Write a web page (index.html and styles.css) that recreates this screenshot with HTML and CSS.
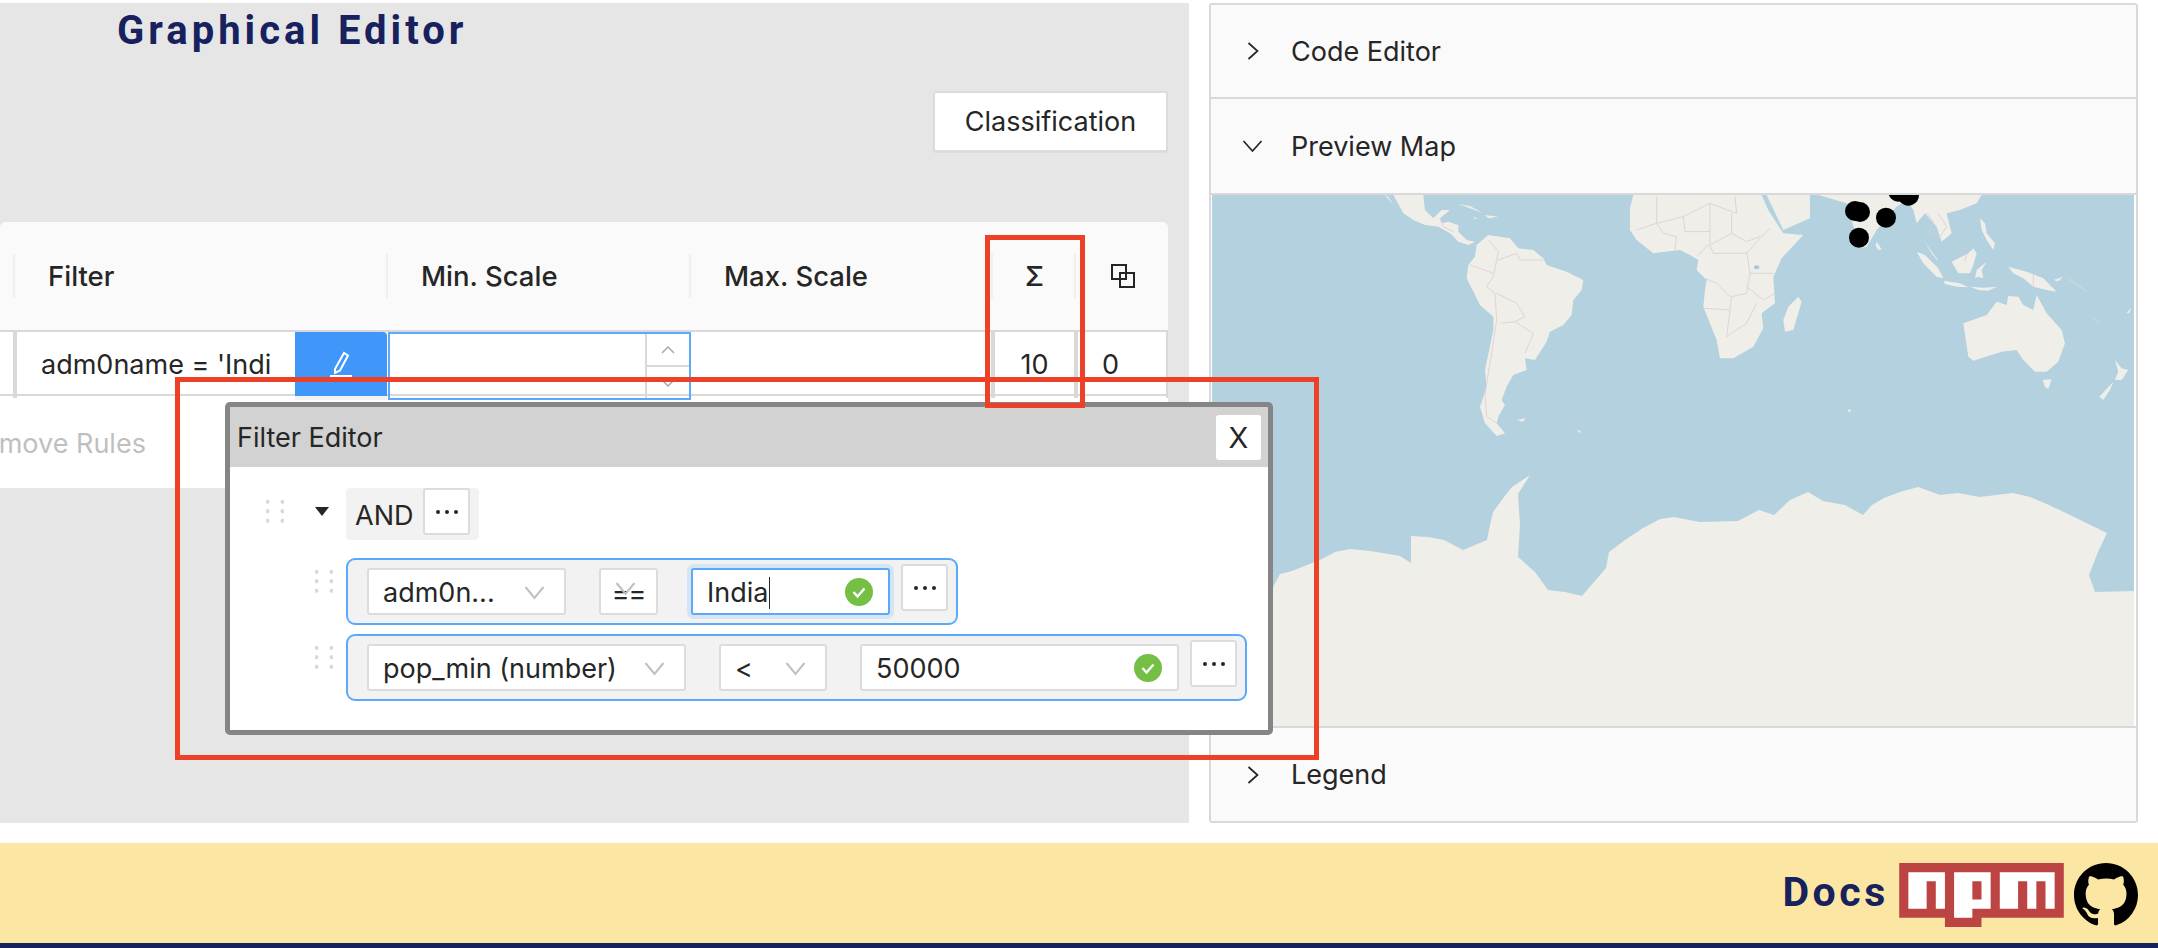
FILE: index.html
```html
<!DOCTYPE html>
<html lang="en">
<head>
<meta charset="utf-8">
<title>Graphical Editor</title>
<link rel="stylesheet" href="styles.css">
</head>
<body>
<svg class="defs" width="0" height="0" aria-hidden="true">
  <symbol id="dots" viewBox="0 0 24 6"><circle cx="3" cy="3" r="2"/><circle cx="12" cy="3" r="2"/><circle cx="21" cy="3" r="2"/></symbol>
  <symbol id="dd" viewBox="0 0 20 14"><path d="M1 1l9 11 9-11" fill="none" stroke="#bfbfbf" stroke-width="2"/></symbol>
  <symbol id="ok" viewBox="0 0 28 28"><circle cx="14" cy="14" r="14" fill="#75c044"/><path d="M8.500 14l4 4.500 7-8" fill="none" stroke="#fff" stroke-width="2.400"/></symbol>
</svg>
<div class="page">
  <main class="main">
    <section class="editor">
      <h1 class="title">Graphical Editor</h1>
      <div class="toolbar"><button class="btn-class">Classification</button></div>
      <div class="card">
        <div class="thead">
          <div class="th"></div>
          <div class="th">Filter</div>
          <div class="th">Min. Scale</div>
          <div class="th">Max. Scale</div>
          <div class="th th-center">Σ</div>
          <div class="th th-icon">
            <svg class="copy" viewBox="0 0 24 24"><path d="M1 1h14v14H1zM9 9h14v14H9z" fill="none" stroke="#262626" stroke-width="2"/></svg>
          </div>
        </div>
        <div class="tbody">
          <div class="td"></div>
          <div class="td td-filter">
            <span class="filter-text">adm0name = 'Indi</span>
            <button class="btn-edit" aria-label="Edit">
              <svg viewBox="0 0 24 28" width="24" height="28"><path d="M6 19 15 3l4 2.500-8 15-5 2.500zM1 26h22" fill="none" stroke="#fff" stroke-width="2"/></svg>
            </button>
          </div>
          <div class="td td-input">
            <div class="spin">
              <span class="spin-btn"><svg viewBox="0 0 14 8" width="14" height="8"><path d="M1 7l6-6 6 6" fill="none" stroke="#aaa" stroke-width="1.500"/></svg></span>
              <span class="spin-btn"><svg viewBox="0 0 14 8" width="14" height="8"><path d="M1 1l6 6 6-6" fill="none" stroke="#aaa" stroke-width="1.500"/></svg></span>
            </div>
          </div>
          <div class="td td-max"></div>
          <div class="td td-num td-sum">10</div>
          <div class="td td-num td-last">0</div>
        </div>
        <div class="card-foot"><span class="remove">Remove Rules</span></div>
      </div>
    </section>

    <aside class="side">
      <div class="acc-head">
        <svg class="chev" viewBox="0 0 14 20"><path d="M2 2l9 8-9 8" fill="none" stroke="#262626" stroke-width="1.700"/></svg>
        <span>Code Editor</span>
      </div>
      <div class="acc-head acc-open">
        <svg class="chev chev-down" viewBox="0 0 20 14"><path d="M1 2l9 10 9-10" fill="none" stroke="#262626" stroke-width="1.700"/></svg>
        <span>Preview Map</span>
      </div>
      <div class="map">
        <svg viewBox="1212 195 922 531" width="922" height="531">
          <rect x="1212" y="195" width="922" height="531" fill="#b3d1de"/>
          <g transform="translate(1370 190) scale(.3333)">
            <g fill="#f0eee9">
              <path d="M70 15l30 55 30 20 35 15 40 5 35 20 25 25 30 10 20-10-25-5-25-25v-20l-30-10-20 5-5-15 30-25h-25l-25 25-25-25-5-45z"/>
              <path d="M45 15l25 30-15-25zM265 42l35 6 40 22-40-15zM345 75l40 5-30 5zM310 82l12 2-6 4zM440 690l28-5-10 10zM622 718l12 8-8 2z"/>
              <path d="M355 135l65 10 25 30 45 5 30 25 10 20 60 20 50 25-5 30-25 30-5 45-25 30-40 20-10 30-35 55-30-5 5 35-40 15-20 35-15 40 10 15-20 35-5 20 25 30-25 8-35-38-15-50 20-60-5-50 25-120v-40l-40-35-40-80 5-40 20-25 5-35z"/>
              <path d="M790 15l-10 40v65l20 30 50 40 80-10 30 15 25 15-5 30 30 30-5 30-5 50 40 100 10 55h40l60-35 30-55-5-45 40-30-5-80 25-55 65-70-60-5-45-70-20-45z"/>
              <path d="M1285 320l10 15-25 85-25 5-5-35 15-40z"/>
              <path d="M1190 15l50 105 80-35V15z"/>
            </g>
            <g fill="none" stroke="#dccdd5" stroke-width="2.500">
              <path d="M355 150l30 35-15 75-20 30 25 20 5 80-15 100-20 120 5 70 30 20M380 310l60 30 25 40-30 15 55 35-25 60M385 210l55-20 10 20h70M300 225l70 25M395 400l40-5M210 85l10 25 30 15"/>
              <path d="M860 20v80l-60 20M860 100l80-20 80-40 80 30-5-50M1020 40v120l-40 40M940 80l5 45h75M860 100l20 30 40 10-5 40M1085 70v60l-65 35 10 25h100l40-45 30-30M1085 130l45 25 40-15M1130 185l10 65-10 60-45 10-5 40-80-5M1080 360l-10 80 60-40 30-60M1140 250h70M1130 290l50 40 35-20M1080 320l-40-40-35-15"/>
            </g>
            <ellipse cx="1160" cy="232" rx="8" ry="6" fill="#a5c6dc"/>
          </g>
          <g transform="translate(1760 190) scale(.3333)">
            <g fill="#f0eee9">
              <path d="M175 15l85 25 40 135 20-5 30-50 60-70 30-20 20 30 10 40 25-30 35 40 15 45 30-25-15-60 40-10 50-20 15-25z"/>
              <path d="M350 155l15 23-10 2-8-12z"/>
              <path d="M470 185l25 10 40 40 15 30-20-5-40-40zM550 272l50 8 25 12-35-2-35-8zM630 290l40 3 40-3-25 12-30-2zM575 215l50-25 15-15 10 15-10 35-10 25h-35zM490 150l40 55 5 10-20-25zM650 240l30-25-15 25 5 25-15-5-10 5zM660 85l15 15 5 30 25 30-5 20-20-30-15-30zM745 230l55 15 50 20 40 40-30-5-40-10-30-25-30-15zM880 270l30-10-15 14z"/>
              <path d="M610 400l70-25 30-40 30 10 5-27 30 2 15 25 30 15 10-45 30 55 45 50 10 40-20 55-35 30h-35l-35-35-20-30-45 5-85 27-15-12z"/>
              <path d="M848 570l27-2-10 29-10-7zM1065 510l20 25 20 5-20 30h-20l10-25zM1060 575l-10 25-20 30-12-10zM262 658l12 2-5 8zM1100 368l15-15-8 17z"/>
            </g>
            <path d="M925 265l55 40M1000 385l18 15" fill="none" stroke="#d4e0e2" stroke-width="2.500"/>
            <g fill="none" stroke="#dccdd5" stroke-width="2.500">
              <path d="M500 70l20 25-10 30 30 15 20-30-25-40M820 250v45M620 190l-5 25"/>
            </g>
            <g fill="#000">
              <circle cx="285" cy="63" r="30"/>
              <circle cx="300" cy="66" r="30"/>
              <circle cx="378" cy="83" r="30"/>
              <circle cx="297" cy="143" r="30"/>
              <circle cx="415" cy="5" r="30"/>
              <circle cx="445" cy="15" r="32"/>
            </g>
          </g>
          <path fill="#f0eee9" d="M1212 600 1273 587 1280 574 1292 571 1322 559 1335 552 1350 549 1370 551 1389 554 1400 556 1411 563 1411 536 1428 537 1444 540 1463 550 1487 540 1490 525 1493 512 1504 497 1512 487 1530 475 1518 494 1520 525 1518 557 1535 572 1548 590 1565 592 1582 596 1606 568 1609 552 1625 540 1643 528 1660 519 1674 517 1700 522 1738 521 1759 510 1774 515 1790 500 1808 492 1823 501 1845 505 1863 515 1872 505 1884 498 1900 492 1918 487 1940 495 1958 493 1980 497 2013 493 2030 497 2049 505 2070 515 2107 533 2098 552 2089 575 2095 592 2134 591V726H1212z"/>
        </svg>
      </div>
      <div class="acc-head acc-last">
        <svg class="chev" viewBox="0 0 14 20"><path d="M2 2l9 8-9 8" fill="none" stroke="#262626" stroke-width="1.700"/></svg>
        <span>Legend</span>
      </div>
    </aside>
  </main>

  <footer class="footer">
    <a class="docs">Docs</a>
    <svg class="npm" viewBox="0 0 18 7" width="165" height="64"><path fill="#bc4442" d="M0 0h18v6H9v1H5V6H0z"/><path fill="#fff" d="M1 1v4h2V2h1v3h1V1zM6 1v5h2V5h2V1zM8 2h1v2H8zM11 1v4h2V2h1v3h1V2h1v3h1V1z"/></svg>
    <svg class="gh" viewBox="0 0 16 16" width="64" height="64"><path fill="#000" d="M8 0C3.580 0 0 3.580 0 8c0 3.540 2.290 6.530 5.470 7.590.4.07.55-.17.55-.38 0-.19-.01-.82-.01-1.490-2.010.37-2.530-.49-2.690-.94-.09-.23-.48-.94-.82-1.130-.28-.15-.68-.52-.01-.53.63-.01 1.080.58 1.230.82.72 1.210 1.870.87 2.330.66.07-.52.28-.87.51-1.070-1.780-.2-3.640-.89-3.640-3.950 0-.87.31-1.590.82-2.150-.08-.2-.36-1.020.08-2.120 0 0 .67-.21 2.200.82.64-.18 1.320-.27 2-.27.68 0 1.360.09 2 .27 1.530-1.040 2.200-.82 2.200-.82.44 1.100.16 1.920.08 2.120.51.56.82 1.270.82 2.150 0 3.070-1.870 3.750-3.650 3.950.29.25.54.73.54 1.480 0 1.070-.01 1.930-.01 2.200 0 .21.15.46.55.38A8.013 8.013 0 0016 8c0-4.420-3.580-8-8-8z"/></svg>
  </footer>

  <div class="dialog">
    <div class="dialog-head">
      <span>Filter Editor</span>
      <button class="btn-close">X</button>
    </div>
    <div class="dialog-body">
      <div class="line">
        <div class="gutter gutter-and"><span class="grip"></span><span class="tri"></span></div>
        <div class="and-box"><span class="and-text">AND</span><button class="more" aria-label="More"><svg class="dots"><use href="#dots"/></svg></button></div>
      </div>
      <div class="line line-rule">
        <div class="gutter"><span class="grip"></span></div>
        <div class="rule">
          <div class="field f-attr-short"><span>adm0n...</span><svg class="dd"><use href="#dd"/></svg></div>
          <div class="field f-op-short"><span class="op-eq">==</span><svg class="dd dd-under"><use href="#dd"/></svg></div>
          <div class="field f-val-short f-focus"><span>India<i class="caret"></i></span><svg class="ok"><use href="#ok"/></svg></div>
          <button class="more" aria-label="More"><svg class="dots"><use href="#dots"/></svg></button>
        </div>
      </div>
      <div class="line line-rule2">
        <div class="gutter"><span class="grip"></span></div>
        <div class="rule">
          <div class="field f-attr"><span>pop_min (number)</span><svg class="dd"><use href="#dd"/></svg></div>
          <div class="field f-op"><span>&lt;</span><svg class="dd"><use href="#dd"/></svg></div>
          <div class="field f-val"><span>50000</span><svg class="ok"><use href="#ok"/></svg></div>
          <button class="more" aria-label="More"><svg class="dots"><use href="#dots"/></svg></button>
        </div>
      </div>
    </div>
  </div>

  <div class="mark mark-big"></div>
  <div class="mark mark-sum"></div>
</div>
</body>
</html>
```

FILE: styles.css
```css
* { box-sizing: border-box; }
html, body { margin: 0; padding: 0; background: #fff; }
body { font-family: Inter, "Noto Sans", sans-serif; font-size: 27px; color: #262626; overflow: hidden; }
button { font-family: inherit; color: inherit; }
.defs { position: absolute; }

.page { position: relative; width: 2158px; height: 948px; overflow: hidden; padding-top: 3px; display: flex; flex-direction: column; }
.main { display: flex; height: 820px; gap: 20px; }

/* left editor */
.editor { width: 1189px; background: #e6e6e6; display: flex; flex-direction: column; overflow: hidden; }
.title { margin: 0; height: 56px; padding-left: 117px; font-family: Roboto, sans-serif; font-weight: 700; font-size: 40px; line-height: 56px; letter-spacing: 4px; color: #16215e; }
.toolbar { display: flex; justify-content: flex-end; padding: 32px 21px 0 0; height: 163px; }
.btn-class { width: 235px; height: 62px; background: #fff; border: 2px solid #dcdcdc; border-bottom-width: 3px; border-radius: 3px; font-size: 27px; padding: 0; }
.card { width: 1168px; height: 266px; background: #fff; border-radius: 6px 6px 0 0; display: flex; flex-direction: column; }
.thead, .tbody { display: grid; grid-template-columns: 15px 373px 303px 302px 83px 92px; }
.thead { height: 108px; background: #fafafa; align-items: center; border-radius: 6px 6px 0 0; }
.th { height: 44px; line-height: 44px; padding-left: 33px; font-weight: 500; font-size: 27.500px; border-right: 2px solid #efefef; }
.th:first-child { padding: 0; }
.th-center { padding: 0 0 0 2px; text-align: center; }
.th-icon { border-right: 0; padding: 0 0 0 35px; display: flex; align-items: center; }
.copy { width: 24px; height: 24px; }
.tbody { height: 66px; border-top: 2px solid #d9d9d9; border-bottom: 2px solid #d9d9d9; }
.td { border-right: 2px solid #d9d9d9; }
.td-filter { display: flex; justify-content: space-between; padding-left: 24px; border-left: 2px solid #d9d9d9; border-right: 0; }
.filter-text { white-space: nowrap; line-height: 66px; }
.btn-edit { width: 92px; height: 68px; margin: 0 1px -6px 0; padding: 0; background: #4096f9; border: 0; border-bottom: 4px solid #f2f2f2; border-radius: 0 4px 0 0; display: flex; align-items: center; justify-content: center; flex: none; }
.td-input { margin: 0 0 -2px; border: 2px solid #5aa9fa; display: flex; justify-content: flex-end; }
.spin { width: 44px; border-left: 2px solid #d9d9d9; display: flex; flex-direction: column; }
.spin-btn { flex: 1; display: flex; align-items: center; justify-content: center; }
.spin-btn + .spin-btn { border-top: 2px solid #d9d9d9; }
.td-num { line-height: 66px; }
.td-max { border-right: 2px solid #d9d9d9; }
.td-sum { text-align: center; border-left: 2px solid #d9d9d9; border-right: 2px solid #d9d9d9; }
.td-last { padding-left: 24px; border-left: 2px solid #d9d9d9; border-right: 2px solid #d9d9d9; }
.card-foot { flex: 1; overflow: hidden; padding: 31px 0 0; }
.remove { display: block; margin-left: -34px; color: #bfbfbf; white-space: nowrap; }

/* right panel */
.side { width: 929px; border: 2px solid #d9d9d9; border-radius: 3px; display: flex; flex-direction: column; background: #fafafa; }
.acc-head { height: 94px; display: flex; align-items: center; padding-left: 34px; gap: 29px; border-bottom: 2px solid #d9d9d9; flex: none; }
.acc-open { height: 96px; }
.acc-last { flex: 1; border-bottom: 0; border-top: 2px solid #d9d9d9; height: auto; }
.chev { width: 17px; height: 20px; flex: none; }
.chev-down { width: 21px; height: 14px; margin-left: -3px; margin-right: -1px; }
.map { height: 531px; flex: none; overflow: hidden; background: #fff; padding: 0 2px 0 1px; }
.map svg { display: block; }

/* footer */
.footer { margin-top: 20px; height: 105px; background: #fbe7a3; border-bottom: 5px solid #16215e; display: flex; align-items: flex-start; padding: 20px 20px 0 0; justify-content: flex-end; gap: 10px; }
.docs { font-family: Roboto, sans-serif; font-weight: 700; font-size: 41px; line-height: 58px; letter-spacing: 3.600px; color: #16215e; margin-right: 0; }
.npm, .gh { display: block; flex: none; }

/* dialog */
.dialog { position: absolute; left: 225px; top: 402px; width: 1048px; height: 333px; background: #fff; border: 5px solid #858585; border-radius: 5px; }
.dialog-head { height: 60px; background: #d2d2d2; display: flex; align-items: center; justify-content: space-between; padding: 0 7px; }
.btn-close { width: 45px; height: 45px; padding: 0; background: #fff; border: 0; border-radius: 3px; font-size: 29px; }
.dialog-body { padding-top: 21px; }
.line { display: flex; align-items: flex-start; }
.line-rule { margin-top: 18px; }
.line-rule2 { margin-top: 9px; }
.gutter { width: 116px; flex: none; display: flex; padding-left: 85px; }
.gutter-and { padding-left: 36px; gap: 31px; }
.grip { display: block; width: 18px; height: 24px; margin-top: 12px; background: radial-gradient(circle at center, #d9d9d9 1.800px, transparent 2.300px) -6px -3px / 15px 9.500px; flex: none; }
.tri { width: 0; height: 0; margin-top: 19px; border-left: 7.500px solid transparent; border-right: 7.500px solid transparent; border-top: 9px solid #262626; }
.and-box { width: 133px; height: 52px; background: #f2f2f2; border-radius: 4px; display: flex; padding-left: 9px; gap: 10px; }
.and-text { line-height: 56px; }
.more { width: 47px; height: 47px; flex: none; padding: 0; background: #fff; border: 2px solid #dcdcdc; border-radius: 3px; display: flex; align-items: center; justify-content: center; }
.dots { width: 24px; height: 6px; fill: #262626; display: block; }
.rule { display: flex; align-items: flex-start; gap: 33px; padding: 8px 8px 8px 19px; background: #f2f2f2; border: 2px solid #5aa9fa; border-radius: 9px; }
.rule .more { margin: -4px 0 0 -22px; }
.field { height: 47px; background: #fff; border: 2px solid #dcdcdc; border-radius: 3px; display: flex; align-items: center; justify-content: space-between; padding: 2px 19px 0 14px; position: relative; white-space: nowrap; }
.f-attr-short { width: 199px; }
.f-op-short { width: 59px; justify-content: center; padding: 3px 0 0; }
.op-eq { letter-spacing: -1px; }
.f-val-short, .f-val { padding-right: 15px; }
.f-val-short { width: 199px; }
.f-attr { width: 319px; }
.f-op { width: 108px; }
.f-val { width: 319px; }
.f-focus { border-color: #5aa9fa; box-shadow: 0 0 0 4px #d6e4f6; }
.dd { width: 21px; height: 14px; flex: none; }
.dd-under { position: absolute; left: 14px; top: 12px; }
.caret { display: inline-block; width: 1px; height: 32px; margin-left: 1px; background: #262626; vertical-align: -7px; }
.ok { width: 28px; height: 28px; flex: none; display: block; margin-top: -2px; }

/* red annotation marks */
.mark { position: absolute; border: 5px solid #ee4027; pointer-events: none; }
.mark-big { left: 175px; top: 377px; width: 1144px; height: 383px; }
.mark-sum { left: 985px; top: 235px; width: 100px; height: 173px; }
```
